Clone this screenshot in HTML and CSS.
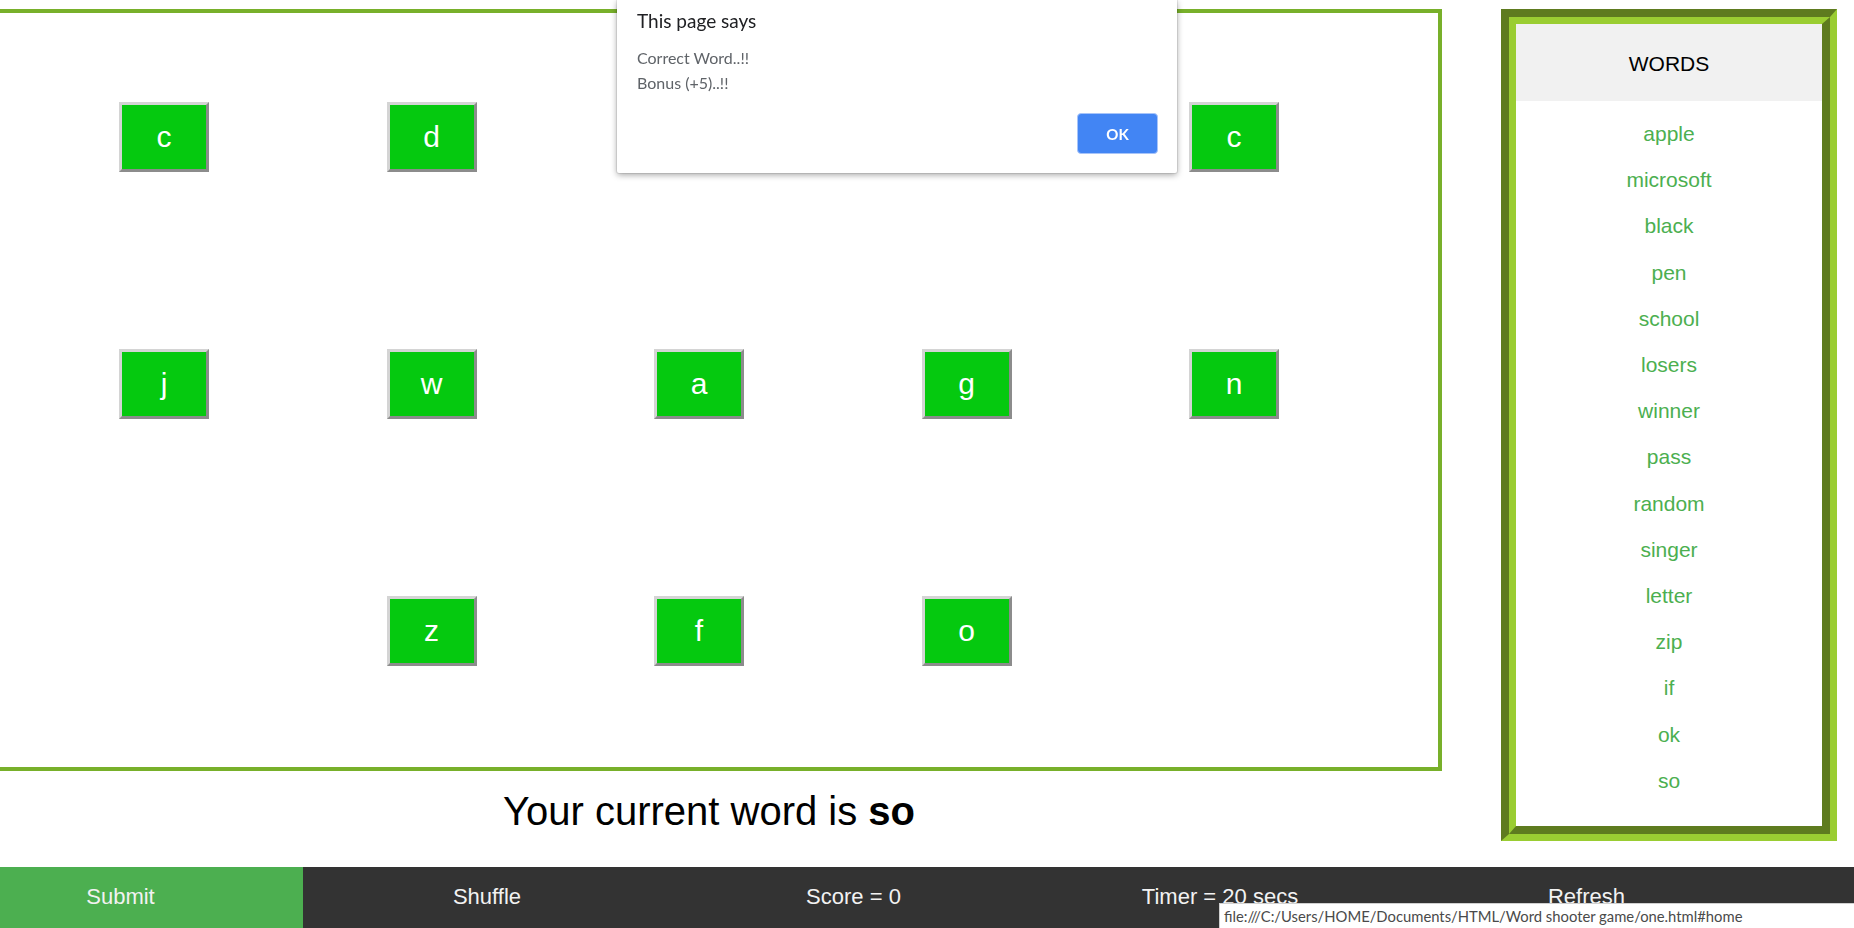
FILE: index.html
```html
<!DOCTYPE html>
<html lang="en">
<head>
<meta charset="utf-8">
<title>Word shooter game</title>
<link rel="stylesheet" href="styles.css">
</head>
<body>
<div class="main">
  <div class="game-col">
    <div class="board">
      <div class="tile">c</div>
      <div class="tile">d</div>
      <div class="tile">s</div>
      <div class="tile">o</div>
      <div class="tile">c</div>
      <div class="tile">j</div>
      <div class="tile">w</div>
      <div class="tile">a</div>
      <div class="tile">g</div>
      <div class="tile">n</div>
      <div class="slot"></div>
      <div class="tile">z</div>
      <div class="tile">f</div>
      <div class="tile">o</div>
      <div class="slot"></div>
    </div>
    <p class="current">Your current word is <b>so</b></p>
  </div>
  <aside class="sidebar">
    <div class="sidebar-inner">
      <div class="words-head">WORDS</div>
      <ul class="words">
        <li>apple</li>
        <li>microsoft</li>
        <li>black</li>
        <li>pen</li>
        <li>school</li>
        <li>losers</li>
        <li>winner</li>
        <li>pass</li>
        <li>random</li>
        <li>singer</li>
        <li>letter</li>
        <li>zip</li>
        <li>if</li>
        <li>ok</li>
        <li>so</li>
      </ul>
    </div>
  </aside>
</div>
<nav class="nav">
  <a class="active" href="#home">Submit</a>
  <a href="#shuffle">Shuffle</a>
  <a href="#score">Score = 0</a>
  <a href="#timer">Timer = 20 secs</a>
  <a href="#refresh">Refresh</a>
</nav>

<div class="dialog">
  <div class="dialog-title">This page says</div>
  <div class="dialog-msg">Correct Word..!!<br>Bonus (+5)..!!</div>
  <div class="dialog-actions"><button class="ok">OK</button></div>
</div>

<div class="status">file:///C:/Users/HOME/Documents/HTML/Word shooter game/one.html#home</div>
</body>
</html>
```
FILE: styles.css
```css
html, body {
  height: 100%;
}
body {
  margin: 0;
  display: flex;
  flex-direction: column;
  overflow: hidden;
  background: #fff;
  font-family: "Liberation Sans", Arial, sans-serif;
  color: #000;
}
.main {
  display: flex;
  align-items: flex-start;
}
.game-col {
  width: 1442px;
  flex: none;
}
.board {
  margin-top: 9px;
  border: 4px solid #78b02a;
  border-left: 0;
  padding: 89px 0 101px 119px;
  display: grid;
  grid-template-columns: repeat(5, 90px);
  grid-auto-rows: 70px;
  column-gap: 177.5px;
  row-gap: 177px;
}
.tile {
  box-sizing: border-box;
  border: 3px solid;
  border-color: #d4d4d4 #8c8c8c #8c8c8c #d4d4d4;
  background: #05c90f;
  color: #fff;
  font-size: 30px;
  display: flex;
  align-items: center;
  justify-content: center;
}
.current {
  margin: 17px 0 0;
  padding-right: 24px;
  font-size: 40px;
  line-height: 46px;
  text-align: center;
}
.sidebar {
  flex: none;
  margin: 9px 0 0 59px;
  width: 336px;
  box-sizing: border-box;
  border-style: solid;
  border-width: 8px 7px 7px 8px;
  border-color: #5e7b1f #9acd32 #9acd32 #5e7b1f;
}
.sidebar-inner {
  border-style: solid;
  border-width: 7px 8px 8px 7px;
  border-color: #9acd32 #5e7b1f #5e7b1f #9acd32;
  background: #fff;
}
.words-head {
  height: 75px;
  padding-top: 2px;
  line-height: 75px;
  background: #f1f1f1;
  text-align: center;
  font-size: 21px;
}
.words {
  list-style: none;
  margin: 0;
  padding: 10px 0 22px;
}
.words li {
  line-height: 46.2px;
  font-size: 21px;
  color: #4caf50;
  text-align: center;
}
.nav {
  margin-top: auto;
  height: 61px;
  background: #333;
  display: flex;
  flex: none;
}
.nav a {
  flex: none;
  width: 241px;
  padding: 17px 62px 0 0;
  margin-right: 63.5px;
  color: #f2f2f2;
  font-size: 22px;
  text-align: center;
  text-decoration: none;
}
.nav a.active {
  background: #4caf50;
}
.dialog {
  position: fixed;
  top: 0;
  left: 617px;
  width: 560px;
  height: 173px;
  box-sizing: border-box;
  padding: 9px 19px 19px 20px;
  display: flex;
  flex-direction: column;
  background: #fff;
  border-radius: 0 0 2px 2px;
  box-shadow: 0 0 0 1px rgba(0, 0, 0, 0.08), 0 2px 6px rgba(0, 0, 0, 0.35);
  font-family: Lato, "Open Sans", sans-serif;
}
.dialog-title {
  font-size: 19px;
  line-height: 24px;
  color: #202124;
}
.dialog-msg {
  margin-top: 12px;
  font-size: 16px;
  line-height: 25px;
  color: #5f6368;
}
.dialog-actions {
  margin-top: auto;
  display: flex;
  justify-content: flex-end;
}
.ok {
  width: 81px;
  height: 41px;
  border: 1px solid #a7c4f9;
  border-radius: 4px;
  background: #4285f4;
  color: #fff;
  font-family: Lato, "Open Sans", sans-serif;
  font-weight: bold;
  font-size: 15px;
}
.status {
  position: fixed;
  left: 1219px;
  right: 0;
  bottom: 0;
  height: 24px;
  padding-left: 4px;
  background: #fff;
  border-top: 1px solid #d0d0d0;
  border-left: 1px solid #d0d0d0;
  font-family: Lato, "Open Sans", sans-serif;
  font-size: 14.8px;
  line-height: 24px;
  color: #4a4a4a;
  white-space: nowrap;
}
```
